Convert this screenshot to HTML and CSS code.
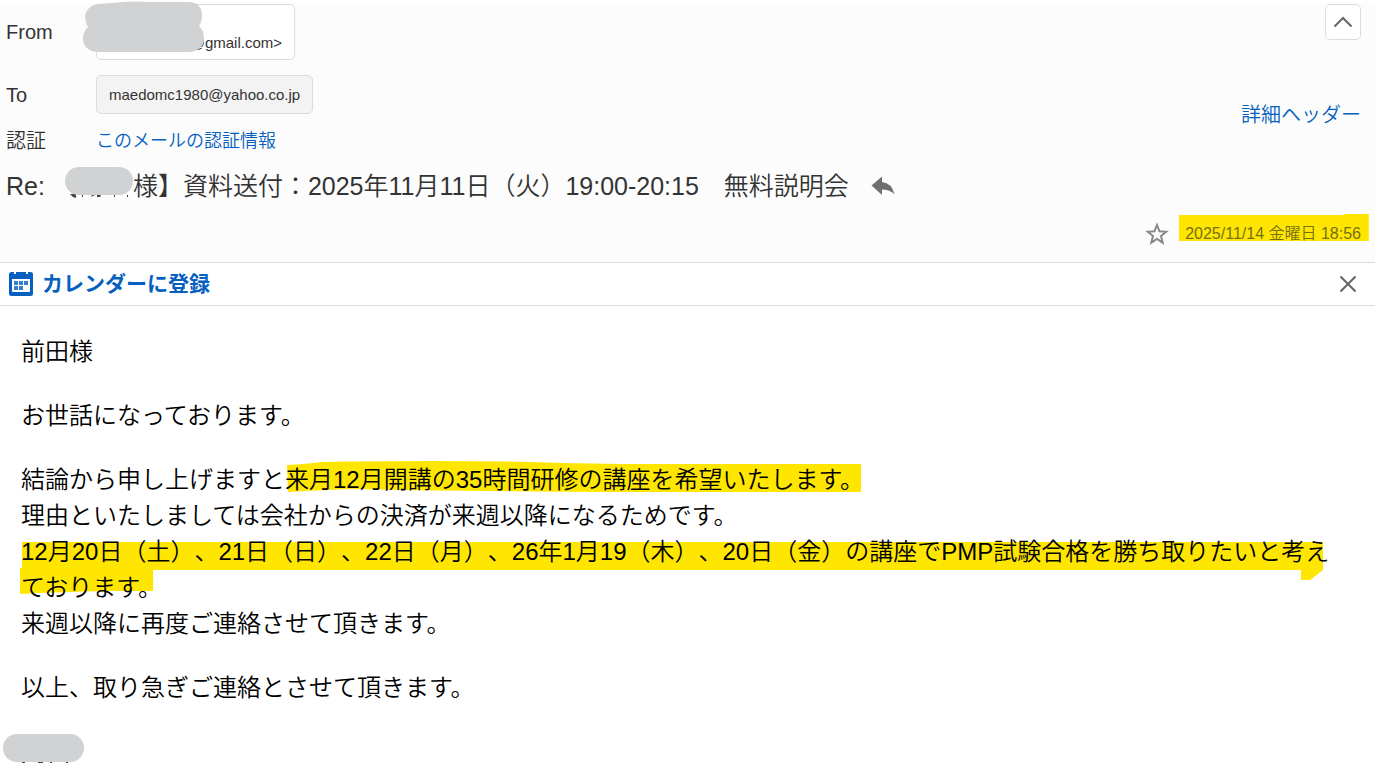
FILE: index.html
```html
<!DOCTYPE html>
<html lang="ja">
<head>
<meta charset="utf-8">
<meta name="viewport" content="width=device-width, initial-scale=1">
<title>メール</title>
<link rel="stylesheet" href="styles.css">
</head>
<body>
<header class="mail-header">
  <div class="header-top">
    <dl class="fields">
      <dt>From</dt>
      <dd><span class="chip chip-from">@gmail.com&gt;
        <svg class="mask mask-from" width="122" height="52" viewBox="0 0 122 52" aria-hidden="true"><path d="M16 3C24 2 34 2 40 1Q54 0 68 1H105C116 1 119 8 119 14Q119 21 116 25Q121 30 121 37Q121 45 114 49Q111 51 106 51H15C6 51 0 45 0 38Q0 31 5 26Q2 21 2 16A14 14 0 0 1 16 3Z"/></svg>
      </span></dd>
      <dt>To</dt>
      <dd><span class="chip chip-to">maedomc1980@yahoo.co.jp</span></dd>
      <dt>認証</dt>
      <dd><a class="auth-link" href="#">このメールの認証情報</a></dd>
    </dl>
    <div class="header-side">
      <button class="collapse" type="button" aria-label="閉じる"><svg width="20" height="12" viewBox="0 0 20 12"><path d="M1.500 10.500L10 2l8.500 8.500"/></svg></button>
      <a class="detail-link" href="#">詳細ヘッダー</a>
    </div>
  </div>
  <div class="subject-row">
    <h1 class="subject"><span>Re:</span><svg class="name-mask" width="68" height="40" viewBox="0 0 68 40" aria-hidden="true"><path class="ink" d="M5 28h6v4q-4-1-6-4zM17 29h1v2h-1zM27 29h3l-4 2zM32 29h4l-1 2h-3zM49 29h1v2h-1zM62 29h1v2h-1z"/><rect class="mask-fill" x="0" y="1" width="68" height="28" rx="14"/></svg><span>様】資料送付：2025年11月11日（火）19:00-20:15　無料説明会</span></h1>
    <svg class="reply" width="24" height="20" viewBox="0 0 24 20" aria-hidden="true"><path d="M.5 9.500L11 .5V6Q21 7 23.500 18.500Q19 13.500 11 13.500V19Z"/></svg>
  </div>
  <div class="date-row">
    <button class="star" type="button" aria-label="スター"><svg width="24" height="24" viewBox="0 0 24 24"><path d="M12 3l2.500 6.300 6.700.5-5.200 4.300 1.700 6.600L12 17l-5.700 3.700L8 14.100 2.800 9.800l6.700-.5z"/></svg></button>
    <time class="date" datetime="2025-11-14T18:56"><svg class="ink-date" viewBox="0 0 191 28" preserveAspectRatio="none" aria-hidden="true"><path d="M0 1H165L168 0H191V27H0Z"/></svg>2025/11/14 金曜日 18:56</time>
  </div>
</header>
<section class="calendar-bar">
  <a class="calendar-link" href="#"><svg width="24" height="24" viewBox="0 0 24 24" aria-hidden="true"><path class="cal-frame" fill-rule="evenodd" d="M2.500 0H5v2h2V0h10v2h2V0h2.500Q24 0 24 2.500v19Q24 24 21.500 24h-19Q0 24 0 21.500v-19Q0 0 2.500 0zM3 7v12q0 1 1 1h16q1 0 1-1V7z"/><path class="cal-days" d="M10 9h4v4h-4zM15 9h4v4h-4zM5 9h4v4H5zM5 14h4v4H5zM10 14h4v4h-4z"/></svg>カレンダーに登録</a>
  <button class="close" type="button" aria-label="閉じる"><svg width="18" height="18" viewBox="0 0 18 18"><path d="M1.500 1.500l15 15m0-15l-15 15"/></svg></button>
</section>
<main class="mail-body">
  <p>前田様</p>
  <p>お世話になっております。</p>
  <p>結論から申し上げますと<span class="marked keep"><svg class="ink-course" viewBox="0 0 575 32" preserveAspectRatio="none" aria-hidden="true"><path d="M2 4Q22 3 36 1Q160-1 245 1Q310 3 360 3H575V31H350Q150 30 65 28Q20 30 3 31Z"/></svg>来月12月開講の35時間研修の講座を希望いたします。</span><br>
  理由といたしましては会社からの決済が来週以降になるためです。<br>
  <span class="marked"><svg class="ink-dates" viewBox="0 0 1304 54" preserveAspectRatio="none" aria-hidden="true"><path d="M2 0L1303 0V28L1290 38H1281V28H133V49H90Q40 50 0 52V26H2Z"/></svg>12月20日（土）、21日（日）、22日（月）、26年1月19（木）、20日（金）の講座でPMP試験合格を勝ち取りたいと考えております。</span><br>
  来週以降に再度ご連絡させて頂きます。</p>
  <p>以上、取り急ぎご連絡とさせて頂きます。</p>
  <div class="signature"><svg class="mask" width="82" height="30" viewBox="0 0 82 30" aria-hidden="true"><rect x="0" y="0" width="81" height="28" rx="14"/><path class="ink" d="M19 28h3v1h-3zM35 28h5v1h-5zM47 28h2v1h-2zM63 28h2v1h-2z"/></svg></div>
</main>
</body>
</html>
```
FILE: styles.css
```css
* { box-sizing: border-box; }
body {
  margin: 0;
  padding-top: 3px;
  background: #fff;
  color: #000;
  font-family: "Liberation Sans", "Noto Sans CJK JP", sans-serif;
  font-weight: 350;
  text-spacing-trim: space-all;
}
a { color: #0560c0; text-decoration: none; }
button { display: flex; align-items: center; justify-content: center; padding: 0; border: 0; background: none; cursor: pointer; }
svg { flex: none; fill: none; }

.mail-header { padding: 1px 14px 16px 6px; background: #fcfcfc; color: #333; }
.header-top { display: flex; justify-content: space-between; }
.fields { display: grid; grid-template-columns: 90px auto; align-items: center; row-gap: 15px; margin: 0; font-size: 20px; line-height: 24px; }
.fields dd { margin: 0; }
.chip { display: flex; width: fit-content; border: 1px solid #dcdcdc; border-radius: 5px; font-size: 15px; line-height: 17px; }
.chip-from { position: relative; justify-content: flex-end; align-items: flex-end; width: 199px; height: 56px; padding: 0 12px 8px; background: #fff; }
.chip-to { padding: 10px 12px; background: #f3f3f3; }
.mask, .mask-fill { fill: #d1d2d4; }
.mask-from { position: absolute; left: -14px; top: -4px; }
.ink { fill: #444; }
.auth-link { display: block; font-size: 18px; line-height: 22px; }
.header-side { display: flex; flex-direction: column; align-items: flex-end; gap: 63px; }
.collapse { width: 36px; height: 36px; border: 1px solid #dcdcdc; border-radius: 5px; background: #fff; }
.collapse svg, .close svg { stroke: #666; stroke-width: 2; }
.detail-link { font-size: 20px; line-height: 24px; }

.subject-row { display: flex; align-items: center; gap: 22px; margin-top: 13px; }
.subject { display: flex; align-items: center; margin: 0; font-size: 25px; font-weight: 350; line-height: 40px; white-space: nowrap; }
.name-mask { margin-left: 20px; }
.reply { fill: #707070; }

.date-row { display: flex; align-items: center; justify-content: flex-end; gap: 16px; margin-top: 16px; }
.star svg { stroke: #888; stroke-width: 2; }
.date { position: relative; z-index: 0; color: #76700f; font-size: 16px; line-height: 24px; }
.date svg, .marked svg { position: absolute; z-index: -1; fill: #ffe600; }
.ink-date { left: -6px; top: -8px; width: calc(100% + 14px); height: 28px; }

.calendar-bar { display: flex; align-items: center; justify-content: space-between; height: 44px; padding: 0 18px 0 9px; border: solid #dcdcdc; border-width: 1px 0; }
.calendar-link { display: flex; align-items: center; gap: 9px; font-size: 21px; font-weight: 700; line-height: 30px; }
.cal-frame { fill: #0560c0; }
.cal-days { fill: #387fcb; }

.mail-body { padding: 28px 24px 20px 21px; font-size: 24px; line-height: 36px; }
.mail-body p { margin: 0 0 28px; }
.marked { position: relative; z-index: 0; }
.keep { white-space: nowrap; }
.ink-course { left: 0; top: -5px; width: calc(100% - 3px); height: 32px; }
.ink-dates { left: -1px; top: 4px; width: 1304px; height: 54px; }
.signature { display: flex; margin-left: -18px; }
```
